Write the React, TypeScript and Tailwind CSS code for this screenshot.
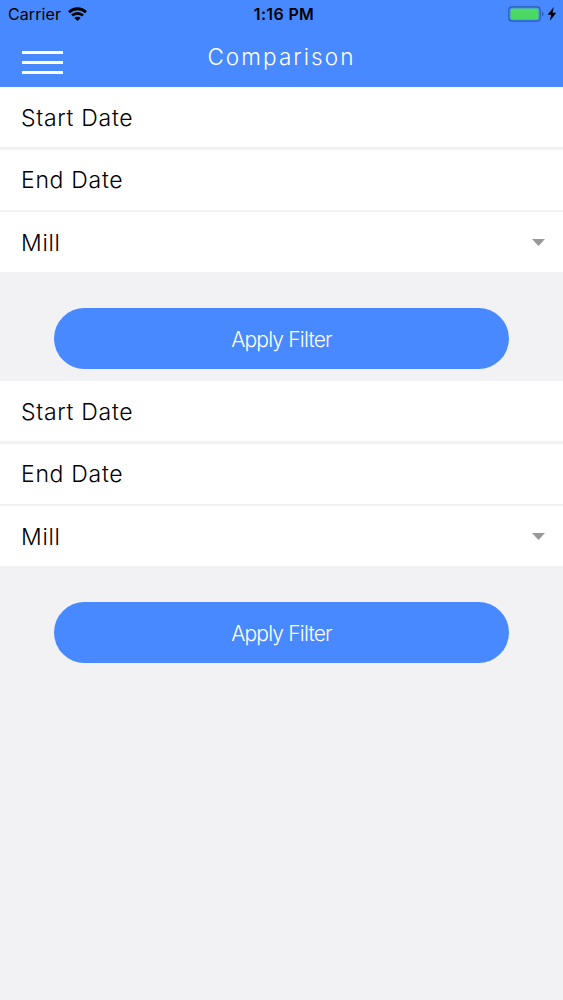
import React from "react";

interface FieldProps {
  label: string;
  dropdown?: boolean;
}

function Field({ label, dropdown }: FieldProps) {
  return (
    <div className="flex h-[60px] items-center justify-between bg-white pl-[21px] pr-[18px]">
      <span className="pt-px text-[23px] font-light leading-7 tracking-[0.7px] text-black">
        {label}
      </span>
      {dropdown && (
        <svg width="13" height="7" viewBox="0 0 13 7" fill="#999999">
          <path d="M0 0h13L6.5 7z" />
        </svg>
      )}
    </div>
  );
}

function FilterForm() {
  return (
    <section className="h-[294px]">
      <div className="flex flex-col gap-[2.5px]">
        <Field label="Start Date" />
        <Field label="End Date" />
        <Field label="Mill" dropdown />
      </div>
      <button className="mx-auto mt-[36px] flex h-[61px] w-[455px] items-center justify-center rounded-full bg-[#4889ff] pt-[3px] text-[21px] font-light tracking-[-0.8px] text-white">
        Apply Filter
      </button>
    </section>
  );
}

function StatusBar() {
  return (
    <div className="grid h-[27px] grid-cols-3 items-center pl-2 pr-[6px] text-black">
      <div className="flex items-center gap-[7px]">
        <span className="pt-px text-[16px] leading-5 tracking-[0.1px]">Carrier</span>
        <svg width="19" height="14" viewBox="0 0 19 14">
          <g fill="none" stroke="currentColor" strokeWidth="2.8">
            <path d="M1 5.2a12.2 12.2 0 0 1 17 0" />
            <path d="M4.1 8.6a7.8 7.8 0 0 1 10.8 0" />
          </g>
          <path d="M9.5 14 6.3 11.1a4.5 4.5 0 0 1 6.4 0z" fill="currentColor" />
        </svg>
      </div>
      <span className="pl-[3px] pt-px text-center text-[16px] font-semibold leading-5 tracking-[0.35px]">
        1:16 PM
      </span>
      <div className="flex items-center justify-end">
        {/* battery */}
        <svg width="36" height="16" viewBox="0 0 36 16">
          <rect x="0.8" y="0.8" width="31.4" height="14.4" rx="3.4" fill="none" stroke="#2b5cb5" strokeWidth="1.2" />
          <rect x="2.5" y="2.5" width="28" height="11" rx="1.6" fill="#4bd964" />
          <path d="M34 5.5c2 .8 2 4.2 0 5z" fill="#2b5cb5" />
        </svg>
        <svg className="ml-[3px]" width="10" height="14" viewBox="0 0 10 14">
          <path d="M6.8 0 .6 7.7h3.6L2.8 14 9.3 5.8H5.6z" fill="currentColor" />
        </svg>
      </div>
    </div>
  );
}

export default function App() {
  return (
    <div className="min-h-[1000px] w-full bg-[#f2f1f3] font-['Inter',sans-serif]">
      <header className="h-[87px] bg-[#4889ff]">
        <StatusBar />
        <div className="grid h-[60px] grid-cols-[1fr_auto_1fr] items-start">
          <button aria-label="Menu" className="ml-[22px] mt-[23.5px] flex w-[41px] flex-col gap-[7px]">
            <span className="h-[3px] w-full bg-white" />
            <span className="h-[3px] w-full bg-white" />
            <span className="h-[3px] w-full bg-white" />
          </button>
          <h1 className="mt-[16px] text-[22.5px] font-light leading-7 tracking-[2.1px] text-white">
            Comparison
          </h1>
        </div>
      </header>
      <FilterForm />
      <FilterForm />
    </div>
  );
}
